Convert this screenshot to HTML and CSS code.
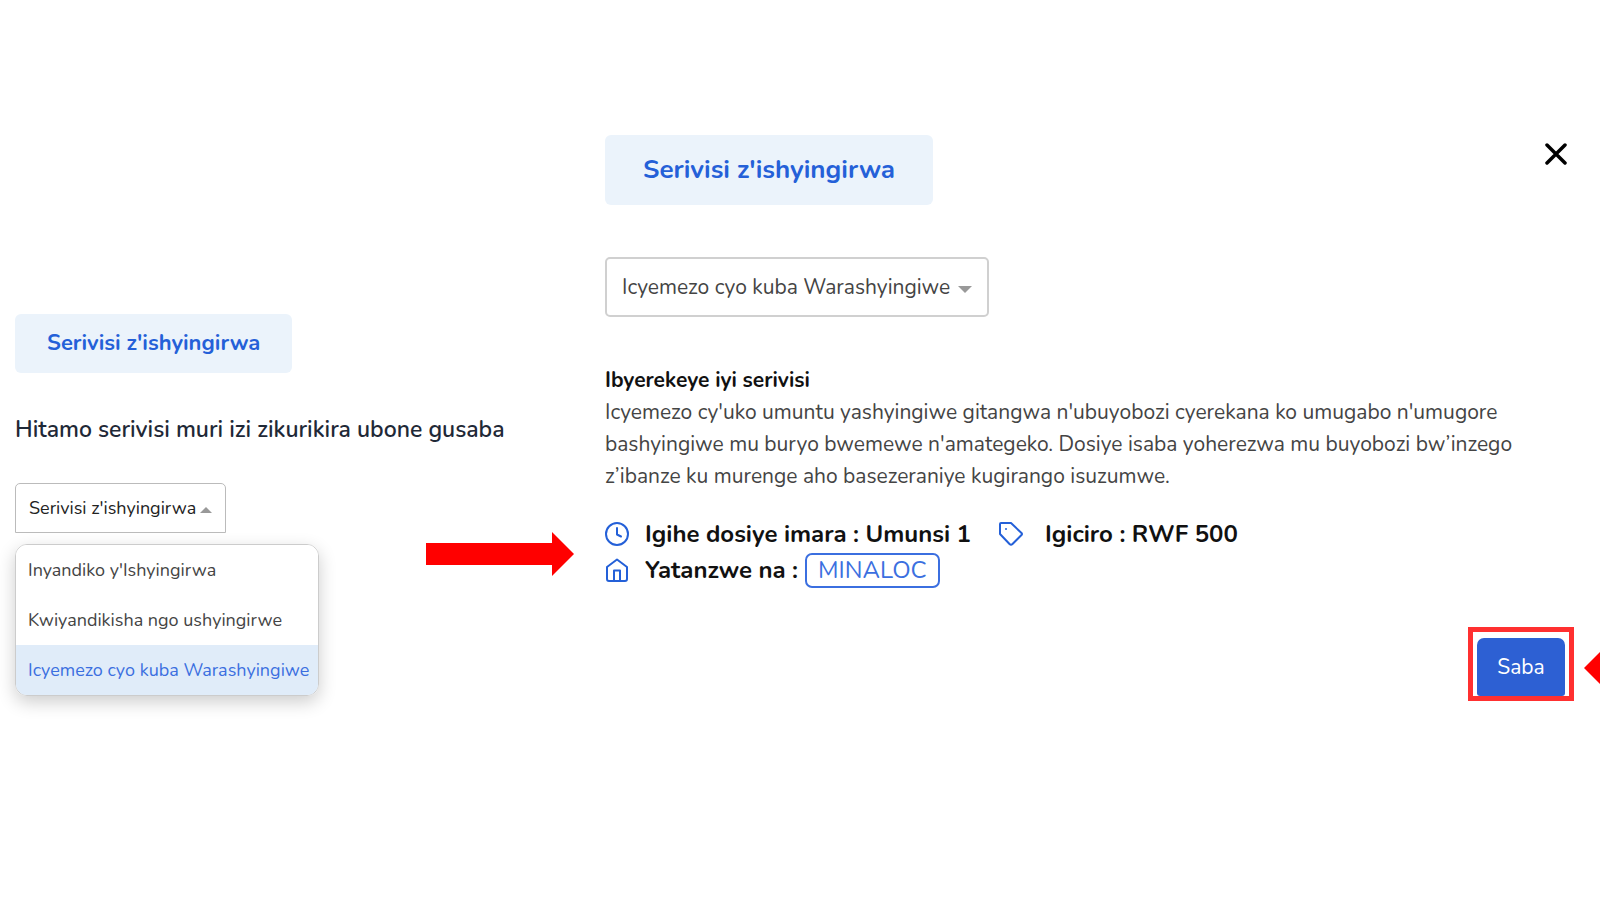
FILE: index.html
```
<!DOCTYPE html>
<html lang="rw">
<head>
  <meta charset="UTF-8" />
  <meta name="viewport" content="width=device-width, initial-scale=1.0" />
  <title>Serivisi z'ishyingirwa</title>
  <link rel="stylesheet" href="styles.css">
</head>
<body>
  <main class="guide">
    <section class="choose">
      <h2 class="chip">Serivisi z'ishyingirwa</h2>
      <h3 class="choose-title"><label for="serviceType">Hitamo serivisi muri izi zikurikira ubone gusaba</label></h3>
      <div class="choose-row">
        <div class="dropdown">
          <div class="select-box open">
            <select id="serviceType">
              <option>Serivisi z'ishyingirwa</option>
            </select>
            <svg width="12" height="6" viewBox="0 0 12 6"><path d="M0 6L6 0l6 6z" fill="#999"/></svg>
          </div>
          <div class="menu">
            <button type="button">Inyandiko y'Ishyingirwa</button>
            <button type="button">Kwiyandikisha ngo ushyingirwe</button>
            <button type="button" class="active">Icyemezo cyo kuba Warashyingiwe</button>
          </div>
        </div>
        <svg class="next-arrow" width="148" height="44" viewBox="0 0 148 44"><path d="M0 11h126V0l22 22-22 22V33H0z" fill="#f00"/></svg>
      </div>
    </section>

    <section class="details">
      <div class="details-header">
        <h2 class="chip large">Serivisi z'ishyingirwa</h2>
        <button type="button" class="close" aria-label="Funga">
          <svg width="22" height="22" viewBox="0 0 22 22"><path d="M2 2l18 18M20 2L2 20" stroke="#000" stroke-width="3.500" stroke-linecap="round"/></svg>
        </button>
      </div>

      <div class="select-box large">
        <select aria-label="Serivisi">
          <option>Icyemezo cyo kuba Warashyingiwe</option>
        </select>
        <svg width="14" height="7" viewBox="0 0 14 7"><path d="M0 0h14L7 7z" fill="#999"/></svg>
      </div>

      <div class="about">
        <h4>Ibyerekeye iyi serivisi</h4>
        <p>Icyemezo cy'uko umuntu yashyingiwe gitangwa n'ubuyobozi cyerekana ko umugabo n'umugore bashyingiwe mu buryo bwemewe n'amategeko. Dosiye isaba yoherezwa mu buyobozi bw’inzego z’ibanze ku murenge aho basezeraniye kugirango isuzumwe.</p>
      </div>

      <div class="facts">
        <div class="fact">
          <svg class="icon" viewBox="0 0 24 24"><circle cx="12" cy="12" r="11"/><path d="M12 6v6.500l4 2"/></svg>
          <span>Igihe dosiye imara : Umunsi 1</span>
        </div>
        <div class="fact price">
          <svg class="icon" viewBox="0 0 24 24"><path d="M1 2q0-1 1-1h10l10.500 10q1 1 0 2l-9 9q-1.500 1.300-3 0L1 12z"/><path d="M7 7h.01"/></svg>
          <span>Igiciro : RWF 500</span>
        </div>
        <div class="fact">
          <svg class="icon" viewBox="0 0 24 24"><path d="M2 9L12 1.500l10 7.500V21q0 2-2 2H4q-2 0-2-2z"/><path d="M9 23V12.500h6V23"/></svg>
          <span>Yatanzwe na :</span>
          <span class="badge">MINALOC</span>
        </div>
      </div>

      <div class="actions">
        <div class="highlight">
          <button type="button" class="apply">Saba</button>
        </div>
        <svg class="edge-arrow" width="16" height="32" viewBox="0 0 16 32"><path d="M16 0v32L0 16z" fill="#f00"/></svg>
      </div>
    </section>
  </main>
</body>
</html>
```
FILE: styles.css
```
* {
  box-sizing: border-box;
}
body {
  margin: 0;
  font-family: Nunito, Lato, sans-serif;
  background: #fff;
  color: #111;
}
h2, h3, h4, p {
  margin: 0;
}
button, select {
  font-family: inherit;
  cursor: pointer;
}
.guide {
  display: grid;
  grid-template-columns: 559px 1fr;
  column-gap: 31px;
  align-items: start;
  min-height: 100vh;
  padding: 135px 0 0 15px;
}

/* left side */
.choose {
  padding-top: 179px;
}
.chip {
  width: fit-content;
  padding: 0 32px;
  border-radius: 6px;
  background: #ebf3fb;
  color: #2460d8;
  font-size: 22px;
  font-weight: 700;
  line-height: 59px;
}
.chip.large {
  padding: 0 38px;
  font-size: 26px;
  line-height: 70px;
}
.choose-title {
  margin: 41px 0 37px;
  color: #1f2937;
  font-size: 23px;
  font-weight: 600;
  line-height: 32px;
}
.choose-row {
  display: flex;
  justify-content: space-between;
  align-items: flex-start;
}
.select-box {
  display: flex;
  align-items: center;
  width: 211px;
  height: 50px;
  padding: 0 13px;
  border: 1px solid #bbb;
  border-radius: 5px;
}
.select-box.open {
  border-radius: 5px 5px 0 0;
}
.select-box select {
  flex: 1;
  min-width: 0;
  padding: 0;
  border: none;
  outline: none;
  background: none;
  appearance: none;
  color: #222;
  font-size: 18px;
}
.select-box svg {
  margin-top: 4px;
}
.select-box.large {
  width: 384px;
  height: 60px;
  margin-top: 52px;
  padding: 0 15px;
  border: 2px solid #d0d0d0;
}
.select-box.large select {
  color: #444;
  font-size: 21px;
}
.menu {
  width: 304px;
  margin-top: 11px;
  border: 1px solid #ccc;
  border-radius: 12px;
  overflow: hidden;
  box-shadow: 0 6px 18px rgba(0,0,0,0.2);
}
.menu button {
  display: block;
  width: 100%;
  height: 50px;
  padding: 0 12px;
  border: none;
  background: #fff;
  color: #444;
  font-size: 18px;
  text-align: left;
  white-space: nowrap;
}
.menu button.active {
  background: #e0ecf9;
  color: #3b6fe0;
}
.next-arrow {
  margin-top: 49px;
}

/* right side */
.details-header {
  display: flex;
  justify-content: space-between;
  align-items: flex-start;
}
.close {
  display: flex;
  margin: 8px 33px 0 0;
  padding: 0;
  border: none;
  background: none;
}
.about {
  max-width: 920px;
  margin-top: 47px;
  font-size: 21px;
  line-height: 32px;
}
.about h4 {
  font-size: 21px;
  font-weight: 700;
}
.about p {
  color: #444;
}
.facts {
  display: flex;
  flex-wrap: wrap;
  column-gap: 28px;
  max-width: 680px;
  margin-top: 24px;
  font-size: 24px;
  font-weight: 700;
}
.fact {
  display: flex;
  align-items: center;
  height: 36px;
}
.icon {
  width: 24px;
  height: 24px;
  margin-right: 16px;
  fill: none;
  stroke: #2460d8;
  stroke-width: 2;
  stroke-linecap: round;
  stroke-linejoin: round;
}
.price .icon {
  margin-right: 22px;
}
.badge {
  margin-left: 7px;
  padding: 0 11px;
  border: 2px solid #3b6fe0;
  border-radius: 7px;
  color: #3b6fe0;
  font-weight: 400;
  line-height: 31px;
}
.actions {
  display: flex;
  justify-content: flex-end;
  align-items: center;
  gap: 10px;
  margin-top: 39px;
}
.highlight {
  padding: 6px 4px 0;
  border: 5px solid #ff3030;
}
.apply {
  display: block;
  width: 88px;
  height: 58px;
  border: none;
  border-radius: 7px 7px 3px 3px;
  background: #2d60d3;
  color: #fff;
  font-size: 21px;
}
.edge-arrow {
  margin-top: 8px;
}
```
